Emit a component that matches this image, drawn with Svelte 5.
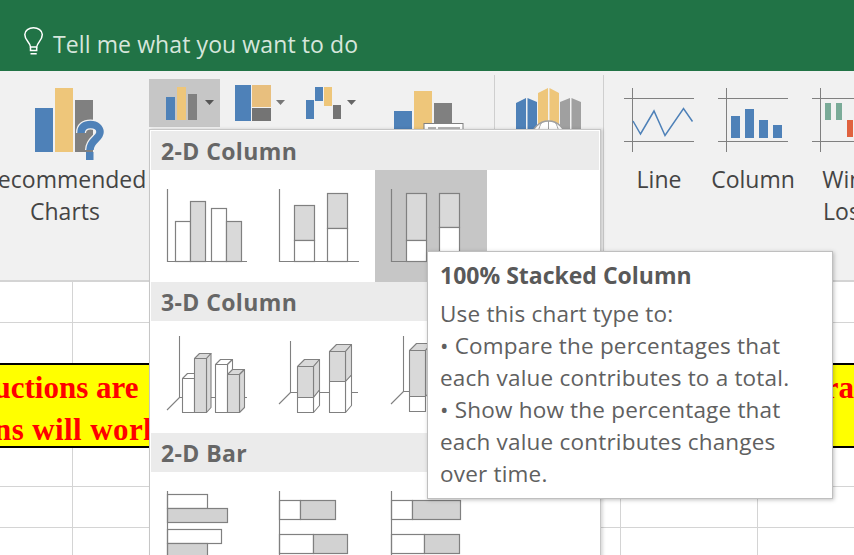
<script>
	const gray = '#d9d9d9';
</script>

<div class="window">
	<header class="topbar">
		<svg class="bulb" viewBox="24 27 20 28">
			<path d="M30.5 47 C30 42 24.8 40.5 24.8 34.5 C24.8 30.5 29 27.8 33.5 27.8 C38 27.8 42.3 30.5 42.3 34.5 C42.3 40.5 37.5 42 36.7 47 Z" />
			<path d="M30.5 47 V50.5 H36.7 V47 M30.5 53.8 H36.7" />
		</svg>
		<span class="tell">Tell me what you want to do</span>
	</header>

	<section class="ribbon">
		<div class="rec">
			<svg class="rec-icon" viewBox="20 88 90 74">
				<rect x="35" y="108" width="18" height="44" fill="#4e81b8" />
				<rect x="55" y="88" width="18" height="64" fill="#eec67a" />
				<rect x="75" y="100" width="18" height="52" fill="#808080" />
				<path d="M81 133 C81 127 85 124.500 90.500 124.500 C96.500 124.500 100 128 100 132 C100 139 90 140 90 150" fill="none" stroke="#f1f1f1" stroke-width="10" />
				<path d="M81 133 C81 127 85 124.500 90.500 124.500 C96.500 124.500 100 128 100 132 C100 139 90 140 90 150" fill="none" stroke="#4e81b8" stroke-width="7.500" />
				<rect x="86" y="152" width="7.500" height="8" fill="#4e81b8" />
			</svg>
			<span class="label">Recommended</span>
			<span class="label">Charts</span>
		</div>

		<div class="tool active">
			<svg viewBox="149 79 71 48">
				<rect x="166" y="97" width="9" height="23" fill="#4e81b8" />
				<rect x="177" y="87" width="9" height="33" fill="#eec67a" />
				<rect x="188" y="94" width="9" height="26" fill="#808080" />
				<path d="M205 100 H214 L209.500 105 Z" fill="#555" />
			</svg>
		</div>
		<div class="tool treemap">
			<svg viewBox="220 79 74 48">
				<rect x="235" y="85" width="16" height="36" fill="#4e81b8" />
				<rect x="252" y="85" width="19" height="22" fill="#e8bf7e" />
				<rect x="252" y="108" width="19" height="13" fill="#747474" />
				<path d="M276 100 H285 L280.500 105 Z" fill="#777" />
			</svg>
		</div>
		<div class="tool waterfall">
			<svg viewBox="294 79 76 48">
				<rect x="306" y="100" width="8" height="19" fill="#4e81b8" />
				<rect x="315" y="87" width="8" height="14" fill="#4e81b8" />
				<rect x="324" y="87" width="8" height="19" fill="#eec67a" />
				<rect x="333" y="105" width="8" height="14" fill="#747474" />
				<path d="M347 100 H356 L351.500 105 Z" fill="#666" />
			</svg>
		</div>
		<div class="tool combo">
			<svg viewBox="370 79 124 60">
				<rect x="394" y="111" width="18" height="28" fill="#4e81b8" />
				<rect x="414" y="91" width="18" height="48" fill="#eec67a" />
				<rect x="434" y="103" width="18" height="36" fill="#808080" />
				<rect x="424" y="123.500" width="39" height="15" fill="#fff" stroke="#808080" />
				<rect x="428" y="127" width="8" height="6" fill="#b5b5b5" />
				<rect x="438" y="127" width="22" height="6" fill="#b5b5b5" />
			</svg>
		</div>
		<div class="sep"></div>
		<div class="tool map">
			<svg viewBox="495 79 108 60">
				<path d="M516 103 L526 98 V139 H516 Z M527.500 98 L537 102 V139 H527.500 Z" fill="#4e81b8" />
				<path d="M538 93 L548 88 V139 H538 Z M549.500 88 L559 93 V139 H549.500 Z" fill="#eec67a" />
				<path d="M560 102 L570 98 V139 H560 Z M571.500 98 L581 102 V139 H571.500 Z" fill="#a0a0a0" />
				<circle cx="548.500" cy="138" r="17" fill="#fff" stroke="#a0a0a0" stroke-width="1.500" />
				<path d="M542 122 C538 128 538 134 539 139 M555 122 C559 128 559 134 558 139 M548.500 121 V139" fill="none" stroke="#a0a0a0" />
			</svg>
		</div>
		<div class="sep"></div>

		<div class="spark">
			<svg viewBox="612 86 94 68">
				<path d="M632.500 88 V152 M624 98.500 H694 M624 141.500 H694" fill="none" stroke="#808080" />
				<polyline points="633,121 640.500,134 654,111 665,135.500 683.500,108.500 692.500,121.500" fill="none" stroke="#4e81b8" stroke-width="1.500" />
			</svg>
			<span class="label">Line</span>
		</div>
		<div class="spark">
			<svg viewBox="706 86 94 68">
				<path d="M726.500 88 V152 M718 98.500 H788 M718 141.500 H788" fill="none" stroke="#808080" />
				<rect x="731" y="116" width="9" height="22" fill="#4e81b8" />
				<rect x="745" y="109" width="9" height="29" fill="#4e81b8" />
				<rect x="759" y="120" width="9" height="18" fill="#4e81b8" />
				<rect x="773" y="125" width="9" height="13" fill="#4e81b8" />
			</svg>
			<span class="label">Column</span>
		</div>
		<div class="spark">
			<svg viewBox="800 86 94 68">
				<path d="M820.500 88 V152 M812 98.500 H882 M812 141.500 H882" fill="none" stroke="#808080" />
				<rect x="825" y="103" width="6" height="17" fill="#7aab98" />
				<rect x="836" y="103" width="6" height="17" fill="#7aab98" />
				<rect x="847" y="120" width="6" height="17" fill="#e0623f" />
			</svg>
			<span class="label">Win/</span>
			<span class="label">Loss</span>
		</div>
	</section>

	<section class="sheet">
		<div class="banner">
			<div class="banner-line">
				<span class="first">Instructions are</span>
				<span class="last">ra</span>
			</div>
			<div class="banner-line">
				<span class="second">ns will work</span>
			</div>
		</div>
	</section>

	<div class="menu">
		<h3>2-D Column</h3>
		<div class="cells">
			<div class="cell">
				<svg viewBox="151 170 112 112">
					<g stroke="#808080" stroke-width="1.200">
						<rect x="175.500" y="221.500" width="15" height="40" fill="#fff" />
						<rect x="190.500" y="201.500" width="15" height="60" fill={gray} />
						<rect x="211.500" y="208.500" width="15" height="53" fill="#fff" />
						<rect x="226.500" y="221.500" width="15" height="40" fill={gray} />
						<path d="M167.500 189 V261.500 H247" fill="none" />
					</g>
				</svg>
			</div>
			<div class="cell">
				<svg viewBox="263 170 112 112">
					<g stroke="#808080" stroke-width="1.200">
						<rect x="294.500" y="205.500" width="20" height="35" fill={gray} />
						<rect x="294.500" y="240.500" width="20" height="21" fill="#fff" />
						<rect x="327.500" y="193.500" width="20" height="35" fill={gray} />
						<rect x="327.500" y="228.500" width="20" height="33" fill="#fff" />
						<path d="M279.500 189 V261.500 H359" fill="none" />
					</g>
				</svg>
			</div>
			<div class="cell selected">
				<svg viewBox="375 170 112 112">
					<g stroke="#808080" stroke-width="1.200">
						<rect x="406.500" y="193.500" width="20" height="47" fill={gray} />
						<rect x="406.500" y="240.500" width="20" height="21" fill="#fff" />
						<rect x="439.500" y="193.500" width="20" height="34" fill={gray} />
						<rect x="439.500" y="227.500" width="20" height="34" fill="#fff" />
						<path d="M391.500 189 V261.500 H471" fill="none" />
					</g>
				</svg>
			</div>
		</div>

		<h3>3-D Column</h3>
		<div class="cells">
			<div class="cell">
				<svg viewBox="151 321 112 112">
					<g stroke="#808080" stroke-width="1.100" stroke-linejoin="round">
						<path d="M179.500 336 V397.500 H247 M179.500 397.500 L167 410" fill="none" />
						<path d="M182.500 378.500 L187.500 373.500 H199 L194.500 378.500 Z" fill="#fff" />
						<rect x="182.500" y="378.500" width="12" height="34" fill="#fff" />
						<path d="M194.500 358.500 L199.500 353.500 H211 L206.500 358.500 Z" fill={gray} />
						<path d="M206.500 358.500 L211 353.500 V407.500 L206.500 412.500 Z" fill={gray} />
						<rect x="194.500" y="358.500" width="12" height="54" fill={gray} />
						<path d="M215.500 364.500 L220.500 359.500 H232.500 L227.500 364.500 Z" fill="#fff" />
						<path d="M227.500 364.500 L232.500 359.500 V375 H227.500 Z" fill="#fff" />
						<rect x="215.500" y="364.500" width="12" height="48" fill="#fff" />
						<path d="M227.500 374.500 L232.500 369.500 H244.500 L239.500 374.500 Z" fill={gray} />
						<path d="M239.500 374.500 L244.500 369.500 V407.500 L239.500 412.500 Z" fill={gray} />
						<rect x="227.500" y="374.500" width="12" height="38" fill={gray} />
					</g>
				</svg>
			</div>
			<div class="cell">
				<svg viewBox="263 321 112 112">
					<g stroke="#808080" stroke-width="1.100" stroke-linejoin="round">
						<path d="M290.500 341 V392.500 H358 M290.500 392.500 L279 404" fill="none" />
						<path d="M297.500 366.500 L304.500 359.500 H319.500 L313.500 366.500 Z" fill={gray} />
						<path d="M313.500 366.500 L319.500 359.500 V390 L313.500 397.500 Z" fill={gray} />
						<path d="M313.500 397.500 L319.500 390 V405.500 L313.500 412.500 Z" fill="#fff" />
						<rect x="297.500" y="366.500" width="16" height="31" fill={gray} />
						<rect x="297.500" y="397.500" width="16" height="15" fill="#fff" />
						<path d="M329.500 351.500 L336.500 344.500 H351.500 L345.500 351.500 Z" fill={gray} />
						<path d="M345.500 351.500 L351.500 344.500 V375 L345.500 381.500 Z" fill={gray} />
						<path d="M345.500 381.500 L351.500 375 V405.500 L345.500 412.500 Z" fill="#fff" />
						<rect x="329.500" y="351.500" width="16" height="30" fill={gray} />
						<rect x="329.500" y="381.500" width="16" height="31" fill="#fff" />
					</g>
				</svg>
			</div>
			<div class="cell">
				<svg viewBox="375 321 112 112">
					<g stroke="#808080" stroke-width="1.100" stroke-linejoin="round">
						<path d="M403.500 336 V391.500 H470 M403.500 391.500 L391 404" fill="none" />
						<path d="M409.500 350.500 L416.500 343.500 H431.500 L425.500 350.500 Z" fill={gray} />
						<path d="M425.500 350.500 L431.500 343.500 V390 L425.500 396.500 Z" fill={gray} />
						<rect x="409.500" y="350.500" width="16" height="46" fill={gray} />
						<rect x="409.500" y="396.500" width="16" height="15" fill="#fff" />
					</g>
				</svg>
			</div>
		</div>

		<h3>2-D Bar</h3>
		<div class="cells">
			<div class="cell">
				<svg viewBox="151 472 112 112">
					<g stroke="#808080" stroke-width="1.200">
						<rect x="167.500" y="494.500" width="40" height="14" fill="#fff" />
						<rect x="167.500" y="508.500" width="60" height="14" fill="#d2d2d2" />
						<rect x="167.500" y="529.500" width="54" height="14" fill="#fff" />
						<rect x="167.500" y="543.500" width="40" height="14" fill="#d2d2d2" />
						<path d="M167.500 491 V570" fill="none" />
					</g>
				</svg>
			</div>
			<div class="cell">
				<svg viewBox="263 472 112 112">
					<g stroke="#808080" stroke-width="1.200">
						<rect x="279.500" y="500.500" width="21" height="19" fill="#fff" />
						<rect x="300.500" y="500.500" width="35" height="19" fill="#d2d2d2" />
						<rect x="279.500" y="534.500" width="34" height="19" fill="#fff" />
						<rect x="313.500" y="534.500" width="34" height="19" fill="#d2d2d2" />
						<path d="M279.500 491 V570" fill="none" />
					</g>
				</svg>
			</div>
			<div class="cell">
				<svg viewBox="375 472 112 112">
					<g stroke="#808080" stroke-width="1.200">
						<rect x="391.500" y="500.500" width="21" height="19" fill="#fff" />
						<rect x="412.500" y="500.500" width="48" height="19" fill="#d2d2d2" />
						<rect x="391.500" y="534.500" width="33" height="19" fill="#fff" />
						<rect x="424.500" y="534.500" width="35" height="19" fill="#d2d2d2" />
						<path d="M391.500 491 V570" fill="none" />
					</g>
				</svg>
			</div>
		</div>
	</div>

	<div class="tooltip">
		<strong>100% Stacked Column</strong>
		<p>Use this chart type to:</p>
		<p>• Compare the percentages that</p>
		<p>each value contributes to a total.</p>
		<p>• Show how the percentage that</p>
		<p>each value contributes changes</p>
		<p>over time.</p>
	</div>
</div>

<style>
	:global(body) {
		margin: 0;
		background: #fff;
	}

	.window {
		position: relative;
		width: 854px;
		height: 555px;
		overflow: hidden;
		font-family: 'Open Sans', 'Noto Sans', sans-serif;
		display: flex;
		flex-direction: column;
	}

	svg {
		display: block;
	}

	.topbar {
		flex: none;
		height: 71px;
		box-sizing: border-box;
		padding: 27px 0 0 24px;
		background: #217346;
		display: flex;
		align-items: flex-start;
		gap: 9px;
	}

	.bulb {
		width: 20px;
		height: 28px;
		fill: none;
		stroke: #fff;
		stroke-width: 1.500;
	}

	.tell {
		font-size: 23px;
		letter-spacing: 0.1px;
		line-height: 35px;
		color: #d6e6dc;
	}

	.ribbon {
		flex: none;
		height: 211px;
		box-sizing: border-box;
		background: #f1f1f1;
		border-bottom: 2px solid #d4d4d4;
		display: flex;
		align-items: flex-start;
	}

	.rec {
		flex: none;
		width: 170px;
		margin: 0 -1px 0 -20px;
		padding-top: 18px;
		display: flex;
		flex-direction: column;
		align-items: center;
	}

	.rec-icon {
		width: 90px;
		height: 74px;
		margin-top: -1px;
		margin-bottom: 1px;
	}

	.label {
		font-size: 23px;
		line-height: 32px;
		color: #444;
		white-space: nowrap;
	}

	.tool {
		flex: none;
		margin-top: 8px;
		height: 48px;
	}

	.tool svg {
		height: 100%;
	}

	.tool.active {
		width: 71px;
		background: #c6c6c6;
	}

	.tool.treemap {
		width: 74px;
	}

	.tool.waterfall {
		width: 76px;
	}

	.tool.combo {
		width: 124px;
		height: 60px;
	}

	.tool.map {
		width: 108px;
		height: 60px;
	}

	.sep {
		flex: none;
		width: 1px;
		height: 201px;
		margin-top: 4px;
		background: #cfcfcf;
	}

	.spark {
		flex: none;
		width: 94px;
		padding-top: 15px;
		display: flex;
		flex-direction: column;
		align-items: center;
	}

	.sep + .spark {
		margin-left: 8px;
	}

	.spark svg {
		width: 94px;
		height: 68px;
		margin-bottom: 9px;
	}

	.sheet {
		flex: 1;
		padding-top: 81px;
		background-image:
			linear-gradient(to right, #d4d4d4 1px, transparent 1px),
			linear-gradient(to bottom, #d4d4d4 1px, transparent 1px);
		background-size: 137px 41px;
		background-position: 72px 40px;
	}

	.banner {
		height: 85px;
		box-sizing: border-box;
		padding-top: 2px;
		background: #ff0;
		border-top: 2px solid #000;
		border-bottom: 2px solid #000;
		font-family: 'Liberation Serif', serif;
		font-weight: 700;
		font-size: 31px;
		line-height: 42px;
		color: #f00;
		white-space: nowrap;
		overflow: hidden;
	}

	.banner-line {
		display: flex;
		justify-content: space-between;
	}

	.first {
		margin-left: -72px;
	}

	.second {
		margin-left: -6px;
		letter-spacing: 0.4px;
	}

	.menu {
		position: absolute;
		left: 149px;
		top: 129px;
		width: 452px;
		height: 440px;
		box-sizing: border-box;
		padding: 1px;
		background: #fff;
		border: 1px solid #c6c6c6;
		box-shadow: 2px 0 3px rgba(0, 0, 0, 0.15);
	}

	.menu h3 {
		margin: 0;
		height: 39px;
		padding-left: 10px;
		background: #ebebeb;
		font-size: 23px;
		letter-spacing: 0.4px;
		font-weight: 700;
		line-height: 40px;
		color: #666;
	}

	.cells {
		display: grid;
		grid-template-columns: repeat(3, 112px);
		height: 112px;
	}

	.cell.selected {
		background: #c6c6c6;
	}

	.cell svg {
		width: 112px;
		height: 112px;
	}

	.tooltip {
		position: absolute;
		left: 427px;
		top: 251px;
		width: 406px;
		height: 248px;
		box-sizing: border-box;
		padding: 7px 12px;
		background: #fff;
		border: 1px solid #bfbfbf;
		box-shadow: 1px 1px 4px rgba(0, 0, 0, 0.25);
		font-size: 22.5px;
		letter-spacing: 0.2px;
		line-height: 32px;
		color: #606060;
	}

	.tooltip strong {
		display: block;
		margin-bottom: 7px;
		font-size: 23px;
		letter-spacing: 0;
		color: #595959;
	}

	.tooltip p {
		margin: 0;
		white-space: nowrap;
	}
</style>
